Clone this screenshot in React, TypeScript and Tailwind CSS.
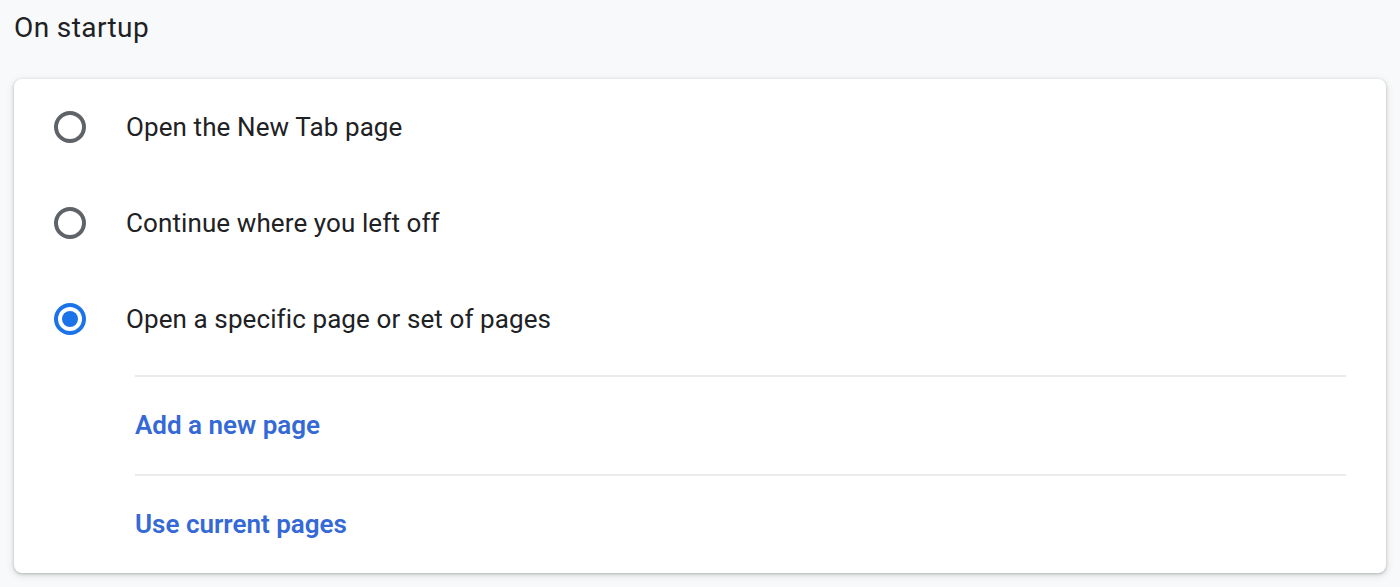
import React from 'react';

const options = [
  { label: 'Open the New Tab page', checked: false },
  { label: 'Continue where you left off', checked: false },
  { label: 'Open a specific page or set of pages', checked: true },
];

function Radio({ checked }: { checked: boolean }) {
  if (checked) {
    return (
      <span className="flex h-[32px] w-[32px] shrink-0 items-center justify-center rounded-full border-[4px] border-[#1a73e8]">
        <span className="h-[16px] w-[16px] rounded-full bg-[#1a73e8]" />
      </span>
    );
  }
  return <span className="block h-[32px] w-[32px] shrink-0 rounded-full border-[4px] border-[#5f6368]" />;
}

export default function App() {
  return (
    <div className="min-h-[587px] bg-[#f8f9fa] px-[14px] font-['Roboto',sans-serif] text-[#202124]">
      <h2 className="pt-[8px] pb-[31px] text-[28px] leading-[40px] tracking-[0.4px]">On startup</h2>
      <div className="rounded-[8px] bg-white shadow-[0_1px_3px_rgba(60,64,67,0.3),0_2px_6px_2px_rgba(60,64,67,0.1)]">
        <div className="pb-[8px]">
          {options.map((o) => (
            <label key={o.label} className="flex h-[96px] cursor-pointer items-center px-[40px]">
              <Radio checked={o.checked} />
              <span className="ml-[40px] text-[26px] tracking-[0.1px]">{o.label}</span>
            </label>
          ))}
        </div>
        <div className="ml-[121px] mr-[40px]">
          <div className="border-t-[2px] border-[#ebebeb]" />
          <a className="flex h-[97px] items-center text-[26px] font-semibold text-[#3569d6]">Add a new page</a>
          <div className="border-t-[2px] border-[#ebebeb]" />
          <a className="flex h-[97px] items-center text-[26px] font-semibold text-[#3569d6]">Use current pages</a>
        </div>
      </div>
    </div>
  );
}
